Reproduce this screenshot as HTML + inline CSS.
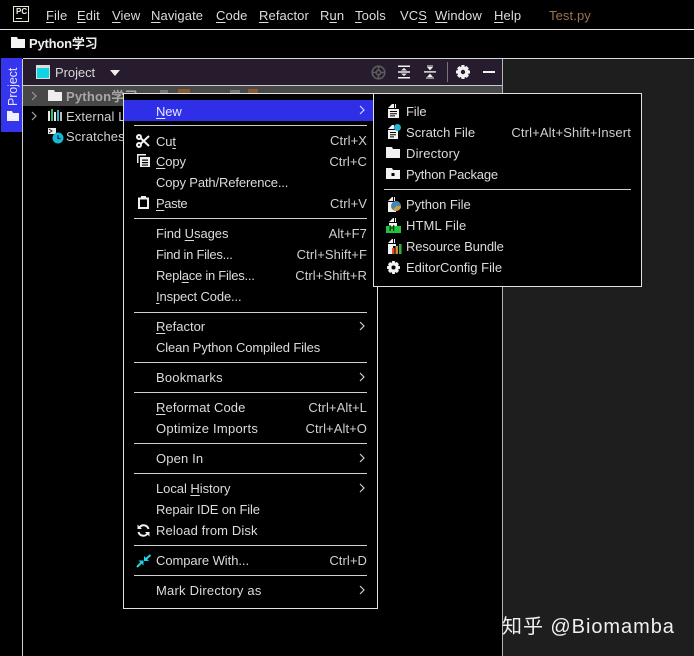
<!DOCTYPE html>
<html><head><meta charset="utf-8">
<style>
html,body{margin:0;padding:0;background:#000}
#p{position:relative;width:694px;height:656px;overflow:hidden;background:#000;font-family:"Liberation Sans","Noto Sans CJK SC",sans-serif;font-size:13px;color:#dcdcdc}
#p div,#p svg{position:absolute}
.t{white-space:nowrap;line-height:21px;height:21px;letter-spacing:-.13px}
.m{white-space:nowrap;line-height:21px;height:21px;letter-spacing:.1px}
.r{white-space:nowrap;line-height:21px;height:21px;letter-spacing:.08px;text-align:right;color:#cfcfcf}
.h{background:#cfcfcf;height:1px}
u{text-underline-offset:2px;text-decoration-thickness:1px}
</style></head><body><div id="p">
<!-- chrome -->
<div style="left:0;top:29px;width:694px;height:1px;background:#e4e4e4"></div>
<div style="left:23px;top:58px;width:671px;height:1px;background:#d8d8d8"></div>
<div style="left:503px;top:59px;width:191px;height:597px;background:#1e1e1e"></div>
<div style="left:502px;top:59px;width:1px;height:597px;background:#b5b5b5"></div>
<div style="left:22px;top:59px;width:1px;height:597px;background:#d0d0d0"></div>
<div style="left:1px;top:58px;width:21px;height:74px;background:#3535f0"></div>
<div style="left:23px;top:59px;width:479px;height:26px;background:#271c2e"></div>
<div style="left:23px;top:85px;width:479px;height:1px;background:#c8c8c8"></div>
<div style="left:23px;top:86px;width:479px;height:20px;background:#484848"></div>

<!-- menu bar -->
<svg style="left:13px;top:6px" width="17" height="17" viewBox="0 0 17 17"><rect x=".5" y=".5" width="15" height="15" fill="#000" stroke="#e8e8c8"/><rect x="3" y="12" width="6" height="1" fill="#e8e8c8"/></svg>
<div class="t" style="left:16px;top:6px;font-size:8px;font-weight:bold;color:#eee;letter-spacing:0;height:12px;line-height:12px">PC</div>
<div class="m" style="left:46px;top:5px"><u>F</u>ile</div>
<div class="m" style="left:77px;top:5px"><u>E</u>dit</div>
<div class="m" style="left:112px;top:5px"><u>V</u>iew</div>
<div class="m" style="left:151px;top:5px"><u>N</u>avigate</div>
<div class="m" style="left:216px;top:5px"><u>C</u>ode</div>
<div class="m" style="left:259px;top:5px"><u>R</u>efactor</div>
<div class="m" style="left:320px;top:5px">R<u>u</u>n</div>
<div class="m" style="left:355px;top:5px"><u>T</u>ools</div>
<div class="m" style="left:400px;top:5px">VC<u>S</u></div>
<div class="m" style="left:435px;top:5px"><u>W</u>indow</div>
<div class="m" style="left:494px;top:5px"><u>H</u>elp</div>
<div class="m" style="left:549px;top:5px;color:#9a7250">Test.py</div>

<!-- nav bar -->
<svg style="left:11px;top:37px" width="14" height="12" viewBox="0 0 14 12"><path d="M0 0H6L7 2H14V11H0Z" fill="#f4f4f4"/></svg>
<div class="t" style="left:29px;top:33px;font-weight:bold;color:#eee;letter-spacing:-.2px">Python学习</div>

<!-- side tab -->
<div class="t" style="left:4px;top:68px;writing-mode:vertical-rl;transform:rotate(180deg);height:38px;width:21px;line-height:19px;color:#e6e6ff;font-size:12.5px;letter-spacing:-.1px">Project</div>
<svg style="left:7px;top:111px" width="12" height="10" viewBox="0 0 12 10"><path d="M0 0H5L6 2H12V10H0Z" fill="#f0f0ff"/></svg>

<!-- panel header -->
<svg style="left:36px;top:65px" width="15" height="15" viewBox="0 0 15 15"><rect x=".5" y=".5" width="13" height="13" fill="#10d4e4" stroke="#dcdcdc"/><rect x="1" y="1" width="12" height="2" fill="#dcdcdc"/></svg>
<div class="t" style="left:55px;top:62px;color:#d8d8d8;letter-spacing:-.05px">Project</div>
<svg style="left:110px;top:70px" width="10" height="6" viewBox="0 0 10 6"><path d="M0 0H10L5 6Z" fill="#eee"/></svg>
<svg style="left:371px;top:65px" width="15" height="15" viewBox="0 0 15 15" fill="none" stroke="#5c5c5c" stroke-width="1.6"><circle cx="7.5" cy="7.5" r="6.3"/><circle cx="7.5" cy="7.5" r="2.2"/><path d="M7.5 1V5M7.5 10V14M1 7.5H5M10 7.5H14"/></svg>
<svg style="left:397px;top:65px" width="14" height="14" viewBox="0 0 14 14"><path d="M1 0.5H13V2H1ZM1 12H13V13.5H1ZM1 6.3H13V7.7H1Z" fill="#f0f0f0"/><path d="M7 3L10 5.5H4ZM7 11L4 8.6H10Z" fill="#f0f0f0"/></svg>
<svg style="left:423px;top:65px" width="14" height="14" viewBox="0 0 14 14"><path d="M1 6.2H13V7.6H1Z" fill="#f0f0f0"/><path d="M7 5.4L4 2H10ZM7 8.6L10 12H4Z" fill="#f0f0f0"/><path d="M4 0.5H10V1.5H4ZM3 12.5H11V13.5H3Z" fill="#f0f0f0"/></svg>
<div style="left:447px;top:62px;width:1px;height:20px;background:#777"></div>
<svg style="left:456px;top:65px" width="14" height="14" viewBox="0 0 14 14"><path d="M5.6 0H8.4L8.8 2L10.6 1L12.8 3.3L11.8 5L14 5.6V8.4L11.9 8.9L12.9 10.7L10.7 12.9L8.9 11.9L8.4 14H5.6L5 11.9L3.3 12.9L1.1 10.7L2.1 8.9L0 8.4V5.6L2.1 5L1.1 3.3L3.3 1.1L5 2.1Z M7 4.8A2.2 2.2 0 1 0 7 9.2A2.2 2.2 0 1 0 7 4.8Z" fill="#f2f2f2" fill-rule="evenodd"/></svg>
<div style="left:483px;top:71px;width:12px;height:2px;background:#f2f2f2"></div>

<!-- tree -->
<svg style="left:30px;top:91px" width="8" height="10" viewBox="0 0 8 10" fill="none" stroke="#9a9a9a" stroke-width="1.2"><path d="M2 1L6 5L2 9"/></svg>
<svg style="left:48px;top:90px" width="14" height="12" viewBox="0 0 14 12"><path d="M0 0H6L7 2H14V11H0Z" fill="#eeeeee"/></svg>
<div class="t" style="left:66px;top:86px;font-weight:bold;color:#a8a8a8;letter-spacing:.2px">Python学习</div>
<div style="left:160px;top:90px;width:8px;height:3px;background:#777"></div>
<div style="left:178px;top:89px;width:12px;height:4px;background:#8a5a30"></div>
<div style="left:230px;top:90px;width:10px;height:3px;background:#777"></div>
<div style="left:248px;top:89px;width:10px;height:4px;background:#8a5a30"></div>
<svg style="left:30px;top:111px" width="8" height="10" viewBox="0 0 8 10" fill="none" stroke="#a8a8a8" stroke-width="1.2"><path d="M2 1L6 5L2 9"/></svg>
<svg style="left:48px;top:109px" width="14" height="12" viewBox="0 0 14 12"><rect x="0" y="2" width="2" height="10" fill="#e8e8e8"/><rect x="3" y="0" width="2" height="12" fill="#34c070"/><rect x="6" y="3" width="2" height="9" fill="#e8e8e8"/><rect x="9" y="1" width="2" height="11" fill="#30b8d0"/><rect x="12" y="3" width="2" height="9" fill="#bbb"/></svg>
<div class="t" style="left:66px;top:106px;color:#cfcfcf;letter-spacing:.1px">External Libraries</div>
<svg style="left:48px;top:128px" width="16" height="16" viewBox="0 0 16 16"><path d="M0 0H8V6H0Z" fill="#eee"/><path d="M1 1L4 3L1 5" stroke="#222" fill="none"/><circle cx="10" cy="10" r="5.5" fill="#18b8d8"/><path d="M10 7V10.5H12.5" stroke="#04303c" fill="none" stroke-width="1.2"/></svg>
<div class="t" style="left:66px;top:126px;color:#cfcfcf;letter-spacing:.1px">Scratches and Consoles</div>

<!-- main menu -->
<div style="left:123px;top:93px;width:253px;height:514px;background:#000;border:1px solid #e0e0e0"></div>
<div style="left:124px;top:100px;width:249px;height:21px;background:#2f2fe8"></div>
<div class="t" style="left:156px;top:101px;color:#e8e8ff"><u>N</u>ew</div>
<svg style="left:358px;top:105px" width="8" height="10" viewBox="0 0 8 10" fill="none" stroke="#d8d8ff" stroke-width="1.2"><path d="M2 1L6 5L2 9"/></svg>
<div class="h" style="left:134px;top:125px;width:233px"></div>

<svg style="left:136px;top:134px" width="14" height="14" viewBox="0 0 14 14" fill="none" stroke="#f4f4f4" stroke-width="2"><circle cx="3" cy="3" r="2"/><circle cx="3" cy="11" r="2"/><path d="M4.5 4L13 12M4.5 10L13 2"/></svg>
<div class="t" style="left:156px;top:131px">Cu<u>t</u></div><div class="r" style="right:327px;top:130px">Ctrl+X</div>
<svg style="left:137px;top:154px" width="13" height="13" viewBox="0 0 13 13"><path d="M0 0H9V1.5H1.5V9H0Z" fill="#eee"/><path d="M3 3H13V13H3Z M5 5.5V6.8H11V5.5Z M5 8V9.3H11V8Z M5 10.5V11.6H11V10.5Z" fill="#eee" fill-rule="evenodd"/></svg>
<div class="t" style="left:156px;top:151px"><u>C</u>opy</div><div class="r" style="right:327px;top:151px">Ctrl+C</div>
<div class="t" style="left:156px;top:172px">Copy Path/Reference...</div>
<svg style="left:138px;top:196px" width="11" height="13" viewBox="0 0 11 13"><path d="M0 1.5H3V0H8V1.5H11V13H0Z M2 3.5V11H9V3.5Z" fill="#f0f0f0" fill-rule="evenodd"/></svg>
<div class="t" style="left:156px;top:193px;letter-spacing:-.4px"><u>P</u>aste</div><div class="r" style="right:327px;top:193px">Ctrl+V</div>
<div class="h" style="left:134px;top:218px;width:233px"></div>

<div class="t" style="left:156px;top:223px;letter-spacing:-.05px">Find <u>U</u>sages</div><div class="r" style="right:327px;top:223px">Alt+F7</div>
<div class="t" style="left:156px;top:244px;letter-spacing:-.27px">Find in Files...</div><div class="r" style="right:327px;top:244px">Ctrl+Shift+F</div>
<div class="t" style="left:156px;top:265px;letter-spacing:-.25px">Repl<u>a</u>ce in Files...</div><div class="r" style="right:327px;top:265px">Ctrl+Shift+R</div>
<div class="t" style="left:156px;top:286px"><u>I</u>nspect Code...</div>
<div class="h" style="left:134px;top:312px;width:233px"></div>

<div class="t" style="left:156px;top:316px;letter-spacing:0"><u>R</u>efactor</div>
<svg style="left:358px;top:321px" width="8" height="10" viewBox="0 0 8 10" fill="none" stroke="#cfcfcf" stroke-width="1.2"><path d="M2 1L6 5L2 9"/></svg>
<div class="t" style="left:156px;top:337px">Clean Python Compiled Files</div>
<div class="h" style="left:134px;top:362px;width:233px"></div>

<div class="t" style="left:156px;top:367px;letter-spacing:.2px">Bookmarks</div>
<svg style="left:358px;top:372px" width="8" height="10" viewBox="0 0 8 10" fill="none" stroke="#cfcfcf" stroke-width="1.2"><path d="M2 1L6 5L2 9"/></svg>
<div class="h" style="left:134px;top:392px;width:233px"></div>

<div class="t" style="left:156px;top:397px;letter-spacing:.1px"><u>R</u>eformat Code</div><div class="r" style="right:327px;top:397px">Ctrl+Alt+L</div>
<div class="t" style="left:156px;top:418px;letter-spacing:.24px">Optimize Imports</div><div class="r" style="right:327px;top:418px">Ctrl+Alt+O</div>
<div class="h" style="left:134px;top:443px;width:233px"></div>

<div class="t" style="left:156px;top:448px;letter-spacing:.15px">Open In</div>
<svg style="left:358px;top:453px" width="8" height="10" viewBox="0 0 8 10" fill="none" stroke="#cfcfcf" stroke-width="1.2"><path d="M2 1L6 5L2 9"/></svg>
<div class="h" style="left:134px;top:473px;width:233px"></div>

<div class="t" style="left:156px;top:478px;letter-spacing:-.05px">Local <u>H</u>istory</div>
<svg style="left:358px;top:483px" width="8" height="10" viewBox="0 0 8 10" fill="none" stroke="#cfcfcf" stroke-width="1.2"><path d="M2 1L6 5L2 9"/></svg>
<div class="t" style="left:156px;top:499px">Repair IDE on File</div>
<svg style="left:137px;top:524px" width="13" height="13" viewBox="0 0 13 13" fill="none" stroke="#f0f0f0" stroke-width="2"><path d="M11.5 5A5 5 0 0 0 2.5 3.5M1.5 8A5 5 0 0 0 10.5 9.5"/><path d="M0.5 0.5V5H5Z M12.5 12.5V8H8Z" fill="#f0f0f0" stroke="none"/></svg>
<div class="t" style="left:156px;top:520px;letter-spacing:.12px">Reload from Disk</div>
<div class="h" style="left:134px;top:545px;width:233px"></div>

<svg style="left:136px;top:554px" width="15" height="14" viewBox="0 0 15 14"><path d="M7.5 6.5V11.5L2.5 6.5Z" fill="#20d8e8"/><path d="M1 13L5 9" stroke="#20d8e8" stroke-width="2" fill="none"/><path d="M8 7V2L13 7Z" fill="#20d8e8"/><path d="M14.5 1L10 5" stroke="#20d8e8" stroke-width="2" fill="none"/></svg>
<div class="t" style="left:156px;top:550px;letter-spacing:-.06px">Compare With...</div><div class="r" style="right:327px;top:550px">Ctrl+D</div>
<div class="h" style="left:134px;top:575px;width:233px"></div>

<div class="t" style="left:156px;top:580px;letter-spacing:.22px">Mark Directory as</div>
<svg style="left:358px;top:585px" width="8" height="10" viewBox="0 0 8 10" fill="none" stroke="#cfcfcf" stroke-width="1.2"><path d="M2 1L6 5L2 9"/></svg>

<!-- submenu -->
<div style="left:373px;top:93px;width:267px;height:192px;background:#000;border:1px solid #e0e0e0"></div>
<svg style="left:388px;top:104px" width="11" height="14" viewBox="0 0 11 14"><path d="M0 4L4 0H6V4ZM0 5H11V14H0Z M2 7V8H9V7Z M2 9.2V10.2H9V9.2Z M2 11.4V12.4H7V11.4Z M7 0H8V4H7Z" fill="#f0f0f0" fill-rule="evenodd"/></svg>
<div class="t" style="left:406px;top:101px">File</div>
<svg style="left:387px;top:124px" width="15" height="15" viewBox="0 0 15 15"><path d="M1 5L5 1H7V5ZM1 6H11V15H1Z M3 8V9H9V8Z M3 10.2V11.2H9V10.2Z M3 12.4V13.4H7V12.4Z" fill="#f0f0f0" fill-rule="evenodd"/><circle cx="10.5" cy="3.5" r="3.5" fill="#22b4d0"/></svg>
<div class="t" style="left:406px;top:122px;letter-spacing:.04px">Scratch File</div><div class="r" style="right:63px;top:122px;letter-spacing:.14px">Ctrl+Alt+Shift+Insert</div>
<svg style="left:386px;top:147px" width="14" height="12" viewBox="0 0 14 12"><path d="M0 0H6L7 2H14V11H0Z" fill="#f2f2f2"/></svg>
<div class="t" style="left:406px;top:143px;letter-spacing:.2px">Directory</div>
<svg style="left:386px;top:168px" width="14" height="12" viewBox="0 0 14 12"><path d="M0 0H6L7 2H14V11H0Z M5.5 5V8H8.5V5Z" fill="#f2f2f2" fill-rule="evenodd"/></svg>
<div class="t" style="left:406px;top:164px;letter-spacing:-.2px">Python Package</div>
<div class="h" style="left:384px;top:189px;width:247px"></div>
<svg style="left:387px;top:197px" width="15" height="15" viewBox="0 0 15 15"><path d="M1 4L5 0H6V4ZM1 5H9V15H1Z M7 0H8V4H7Z" fill="#f0f0f0"/><circle cx="9" cy="9" r="5" fill="#4a84b0"/><path d="M9 9H14A5 5 0 0 1 6 13Z" fill="#c8a040"/></svg>
<div class="t" style="left:406px;top:194px;letter-spacing:-.03px">Python File</div>
<svg style="left:386px;top:218px" width="16" height="15" viewBox="0 0 16 15"><path d="M3 4L7 0H8V4ZM3 5H11V8H3Z M9 0H10V4H9Z" fill="#f0f0f0"/><rect x="0" y="8" width="15" height="7" fill="#22c43e"/></svg>
<div class="t" style="left:389px;top:224px;height:9px;line-height:9px;font-size:8px;font-weight:bold;color:#04310c;letter-spacing:0">H</div>
<div class="t" style="left:406px;top:215px;letter-spacing:.1px">HTML File</div>
<svg style="left:387px;top:239px" width="15" height="15" viewBox="0 0 15 15"><path d="M1 4L5 0H6V4ZM1 5H9V7H6V15H1Z M7 0H8V4H7Z" fill="#f0f0f0"/><rect x="5" y="9" width="2.5" height="6" fill="#e05030"/><rect x="8.5" y="7" width="2.5" height="8" fill="#c89030"/><rect x="12" y="5" width="2.5" height="10" fill="#38b040"/></svg>
<div class="t" style="left:406px;top:236px">Resource Bundle</div>
<svg style="left:387px;top:261px" width="13" height="13" viewBox="0 0 14 14"><path d="M5.6 0H8.4L8.8 2L10.6 1L12.8 3.3L11.8 5L14 5.6V8.4L11.9 8.9L12.9 10.7L10.7 12.9L8.9 11.9L8.4 14H5.6L5 11.9L3.3 12.9L1.1 10.7L2.1 8.9L0 8.4V5.6L2.1 5L1.1 3.3L3.3 1.1L5 2.1Z M7 4.8A2.2 2.2 0 1 0 7 9.2A2.2 2.2 0 1 0 7 4.8Z" fill="#f2f2f2" fill-rule="evenodd"/></svg>
<div class="t" style="left:406px;top:257px;letter-spacing:0">EditorConfig File</div>

<!-- watermark -->
<div class="t" style="left:502px;top:614px;height:26px;line-height:26px;font-size:20px;color:#f0f0f0;letter-spacing:.95px;font-family:'Liberation Sans','Noto Sans CJK SC',sans-serif">知乎 @Biomamba</div>
</div></body></html>
